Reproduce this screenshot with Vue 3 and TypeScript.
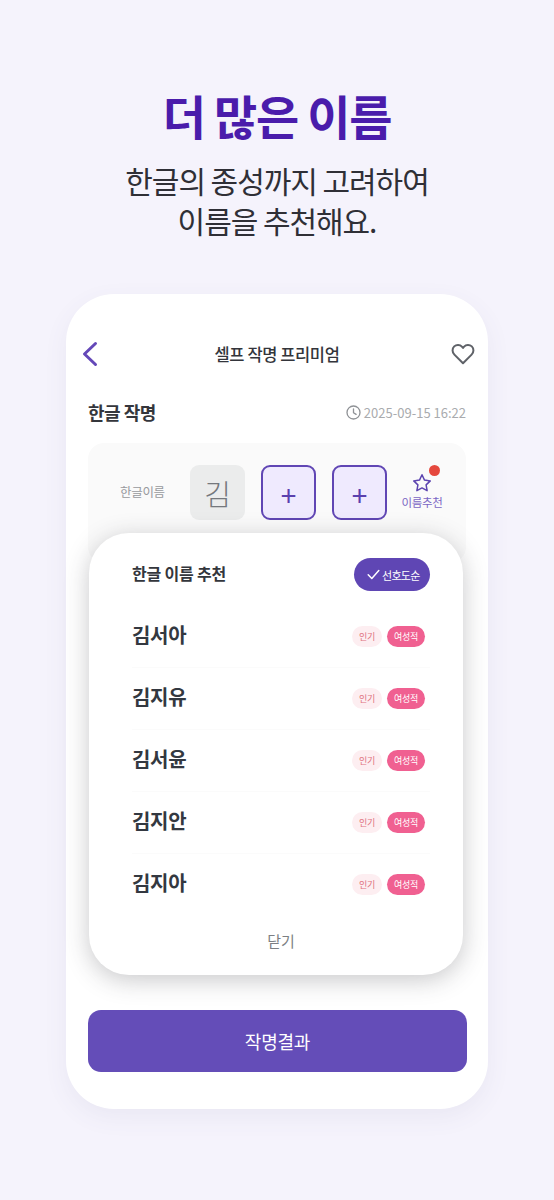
<script setup lang="ts">
const names: string[] = ['김서아', '김지유', '김서윤', '김지안', '김지아']
</script>

<template>
  <main class="page">
    <header class="hero">
      <h1 class="hero-title">더 많은 이름</h1>
      <p class="hero-sub">한글의 종성까지 고려하여<br />이름을 추천해요.</p>
    </header>

    <section class="phone">
      <div class="nav">
        <svg class="back" width="18" height="26" viewBox="0 0 18 26" fill="none">
          <path d="M14.5 2.5 3.5 13l11 10.5" stroke="#6448b8" stroke-width="3" stroke-linecap="round" stroke-linejoin="round" />
        </svg>
        <span class="nav-title">셀프 작명 프리미엄</span>
        <svg class="heart" width="24" height="22" viewBox="0 0 24 22" fill="none">
          <path d="M12 20.3 3.4 11.6C1 9.2 1 5.6 3.2 3.4c2.2-2.1 5.7-2 7.7.2L12 4.9l1.1-1.3c2-2.2 5.500-2.300 7.700-.2 2.200 2.200 2.200 5.800-.2 8.200L12 20.300Z" stroke="#5f6268" stroke-width="2" stroke-linejoin="round" />
        </svg>
      </div>

      <div class="meta">
        <h2 class="meta-title">한글 작명</h2>
        <div class="stamp">
          <svg width="15" height="15" viewBox="0 0 15 15" fill="none">
            <circle cx="7.500" cy="7.500" r="6.500" stroke="#8f9296" stroke-width="1.300" />
            <path d="M7.500 3.800v3.900l2.600 1.700" stroke="#8f9296" stroke-width="1.300" stroke-linecap="round" stroke-linejoin="round" />
          </svg>
          <span>2025-09-15 16:22</span>
        </div>
      </div>

      <div class="input-card">
        <span class="input-label">한글이름</span>
        <div class="tile tile-fixed">김</div>
        <div class="tile tile-add">+</div>
        <div class="tile tile-add">+</div>
        <div class="suggest">
          <i class="dot"></i>
          <svg width="20" height="20" viewBox="0 0 20 20" fill="none">
            <path d="m10 1.800 2.500 5.300 5.800.8-4.200 4 1 5.800-5.100-2.800-5.100 2.800 1-5.800-4.200-4 5.800-.8L10 1.800Z" stroke="#5d45b0" stroke-width="1.500" stroke-linejoin="round" />
          </svg>
          <span>이름추천</span>
        </div>
      </div>

      <button class="submit" type="button">작명결과</button>

      <div class="sheet">
        <div class="sheet-head">
          <h3 class="sheet-title">한글 이름 추천</h3>
          <div class="sort">
            <svg width="13" height="11" viewBox="0 0 13 11" fill="none">
              <path d="M1.200 5.800 4.800 9.500 11.800 1.500" stroke="#fff" stroke-width="1.500" stroke-linecap="round" stroke-linejoin="round" />
            </svg>
            <span>선호도순</span>
          </div>
        </div>
        <ul class="list">
          <li v-for="name in names" :key="name" class="row">
            <span class="name">{{ name }}</span>
            <span class="chip chip-soft">인기</span>
            <span class="chip chip-strong">여성적</span>
          </li>
        </ul>
        <div class="close">닫기</div>
      </div>
    </section>
  </main>
</template>

<style>
html, body { margin: 0; background: #f5f3fc; }
</style>

<style scoped>
.page {
  width: 554px;
  height: 1200px;
  overflow: hidden;
  box-sizing: border-box;
  padding-top: 84px;
  background: #f5f3fc;
  font-family: "Noto Sans CJK KR", "Noto Sans", sans-serif;
}
.hero { text-align: center; }
.hero-title {
  margin: 0;
  height: 62px;
  font-size: 47px;
  line-height: 62px;
  font-weight: 700;
  letter-spacing: -1.300px;
  color: #4a1cab;
}
.hero-sub {
  margin: 14px 0 0;
  font-size: 30px;
  line-height: 40px;
  font-weight: 400;
  letter-spacing: -1.050px;
  color: #2f2f36;
}
.phone {
  position: relative;
  width: 422px;
  height: 815px;
  margin: 54px 0 0 66px;
  box-sizing: border-box;
  padding: 37px 22px 0;
  border-radius: 48px;
  background: #fff;
  box-shadow: 0 8px 24px rgba(90, 80, 130, 0.07);
}
.nav {
  position: relative;
  display: flex;
  align-items: center;
  justify-content: center;
  height: 46px;
}
.back { position: absolute; left: -7px; top: 10px; }
.heart { position: absolute; right: -9px; top: 12px; }
.nav-title {
  font-size: 16.500px;
  font-weight: 500;
  letter-spacing: -0.400px;
  color: #33353b;
}
.meta {
  display: flex;
  align-items: center;
  justify-content: space-between;
  margin-top: 17px;
  height: 36px;
}
.meta-title {
  margin: 0;
  font-size: 18px;
  font-weight: 700;
  letter-spacing: -0.500px;
  color: #34363c;
}
.stamp {
  display: flex;
  align-items: center;
  gap: 3px;
  font-size: 13px;
  color: #a9abae;
}
.input-card {
  display: flex;
  align-items: flex-start;
  height: 120px;
  box-sizing: border-box;
  margin-top: 13px;
  padding: 22px 0 0 32px;
  border-radius: 16px;
  background: #fafafa;
}
.input-label {
  width: 70px;
  margin-top: 17px;
  font-size: 12.500px;
  letter-spacing: -0.300px;
  color: #97999d;
}
.tile {
  display: flex;
  align-items: center;
  justify-content: center;
  box-sizing: border-box;
  width: 55px;
  height: 55px;
  border-radius: 9px;
}
.tile-fixed {
  background: #ebecec;
  font-size: 29px;
  font-weight: 300;
  color: #75787d;
}
.tile-add {
  margin-left: 16px;
  padding-top: 2px;
  border: 2px solid #6046b4;
  background: #efeafe;
  font-size: 28px;
  font-weight: 400;
  color: #5a40ae;
}
.suggest {
  position: relative;
  display: flex;
  flex-direction: column;
  align-items: center;
  width: 48px;
  margin-left: 11px;
  padding-top: 8px;
  font-size: 11.500px;
  letter-spacing: -0.300px;
  color: #7b66c4;
}
.suggest span { margin-top: 1px; line-height: 17px; }
.dot {
  position: absolute;
  top: 0;
  right: 6px;
  width: 11px;
  height: 11px;
  border-radius: 50%;
  background: #e5483d;
}
.submit {
  display: block;
  width: 379px;
  height: 62px;
  margin-top: 447px;
  border: 0;
  border-radius: 13px;
  background: #644db8;
  font: inherit;
  font-size: 18px;
  letter-spacing: -0.200px;
  color: #fff;
}
.sheet {
  position: absolute;
  left: 23px;
  top: 239px;
  width: 374px;
  height: 442px;
  box-sizing: border-box;
  padding: 25px 33px 0 43px;
  border-radius: 40px;
  background: #fff;
  box-shadow: 0 5px 24px rgba(50, 50, 60, 0.27);
}
.sheet-head {
  display: flex;
  align-items: center;
  justify-content: space-between;
  height: 33px;
}
.sheet-title {
  margin: 0 0 3px;
  font-size: 16px;
  font-weight: 700;
  letter-spacing: -0.200px;
  color: #33363c;
}
.sort {
  display: flex;
  align-items: center;
  gap: 2px;
  box-sizing: border-box;
  width: 76px;
  height: 33px;
  padding-left: 13px;
  border-radius: 17px;
  background: #5f46b4;
  font-size: 11px;
  letter-spacing: -0.700px;
  color: #fff;
}
.list {
  margin: 15px 0 0;
  padding: 0;
  list-style: none;
}
.row {
  display: flex;
  align-items: center;
  height: 61px;
  padding-right: 5px;
  border-bottom: 1px solid #fbfbfb;
}
.row:last-child { border-bottom: 0; }
.name {
  flex: 1;
  font-size: 20px;
  font-weight: 700;
  letter-spacing: -0.300px;
  padding-bottom: 4px;
  color: #333840;
}
.chip {
  display: flex;
  align-items: center;
  justify-content: center;
  height: 21px;
  border-radius: 11px;
  font-size: 9px;
  letter-spacing: -0.200px;
}
.chip-soft {
  width: 30px;
  background: #fdeef1;
  color: #e0737f;
}
.chip-strong {
  width: 38px;
  margin-left: 5px;
  background: #f06091;
  color: #fff;
}
.close {
  margin-top: 15px;
  text-align: center;
  font-size: 15px;
  color: #7c7f84;
}
</style>
